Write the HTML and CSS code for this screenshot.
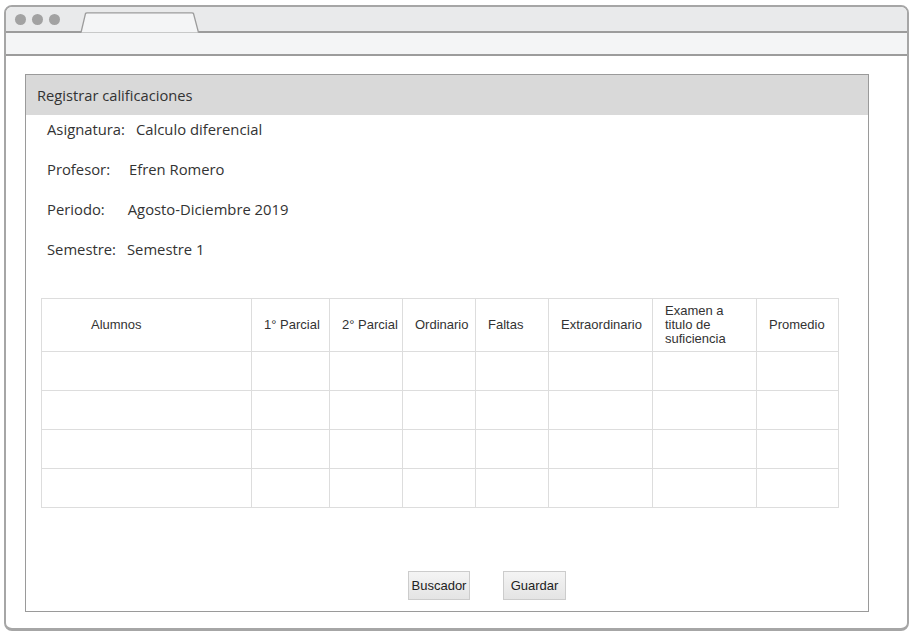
FILE: index.html
```html
<!DOCTYPE html>
<html lang="es">
<head>
<meta charset="utf-8">
<title>Registrar calificaciones</title>
<link rel="stylesheet" href="styles.css">
</head>
<body>
<div class="browser">
  <div class="tabbar">
    <span class="dot"></span><span class="dot"></span><span class="dot"></span>
    <svg class="tab" width="120" height="21" viewBox="0 0 120 21">
      <path d="M1 20.5 L5.5 1.5 Q6 0.8 7 0.8 L112 0.8 Q113 0.8 113.5 1.5 L118.5 20.5" fill="#f4f5f6" stroke="#9c9c9c" stroke-width="1.3"/>
    </svg>
  </div>
  <div class="addressbar"></div>
  <div class="content">
    <div class="panel">
      <div class="panel-head">Registrar calificaciones</div>
      <div class="info">
        <div class="info-row"><span class="lbl">Asignatura:</span><span class="val val-a">Calculo diferencial</span></div>
        <div class="info-row"><span class="lbl">Profesor:</span><span class="val val-p">Efren Romero</span></div>
        <div class="info-row"><span class="lbl">Periodo:</span><span class="val val-r">Agosto-Diciembre 2019</span></div>
        <div class="info-row"><span class="lbl">Semestre:</span><span class="val val-s">Semestre 1</span></div>
      </div>
      <table class="grades">
        <colgroup>
          <col class="c-alum"><col class="c-p1"><col class="c-p2"><col class="c-ord"><col class="c-fal"><col class="c-ext"><col class="c-exa"><col class="c-pro">
        </colgroup>
        <thead>
          <tr>
            <th class="th-alum">Alumnos</th>
            <th>1° Parcial</th>
            <th>2° Parcial</th>
            <th>Ordinario</th>
            <th>Faltas</th>
            <th>Extraordinario</th>
            <th>Examen a<br>titulo de<br>suficiencia</th>
            <th>Promedio</th>
          </tr>
        </thead>
        <tbody>
          <tr><td></td><td></td><td></td><td></td><td></td><td></td><td></td><td></td></tr>
          <tr><td></td><td></td><td></td><td></td><td></td><td></td><td></td><td></td></tr>
          <tr><td></td><td></td><td></td><td></td><td></td><td></td><td></td><td></td></tr>
          <tr><td></td><td></td><td></td><td></td><td></td><td></td><td></td><td></td></tr>
        </tbody>
      </table>
      <div class="actions">
        <button class="btn btn-b" type="button">Buscador</button>
        <button class="btn btn-g" type="button">Guardar</button>
      </div>
    </div>
  </div>
</div>
</body>
</html>
```

FILE: styles.css
```css
html, body {
  margin: 0;
  padding: 0;
  background: #ffffff;
}

body {
  padding: 5px 4px 0 4px;
}

.browser {
  width: 905px;
  height: 626px;
  box-sizing: border-box;
  border: 2px solid #a6a6a6;
  border-bottom-width: 3px;
  border-radius: 8px;
  overflow: hidden;
  display: flex;
  flex-direction: column;
  background: #ffffff;
}

.tabbar {
  height: 24px;
  background: #e9eaeb;
  border-bottom: 2px solid #9c9c9c;
  display: flex;
  align-items: center;
  padding-left: 9px;
  position: relative;
}

.dot {
  width: 11px;
  height: 11px;
  border-radius: 50%;
  background: #a2a2a2;
  margin-right: 6px;
  margin-top: 1px;
}

.tab {
  position: absolute;
  left: 74px;
  bottom: -2px;
}

.addressbar {
  height: 21px;
  background: #f4f5f6;
  border-bottom: 2px solid #9c9c9c;
}

.content {
  flex: 1;
  padding: 18px 39px 16px 19px;
  display: flex;
}

.panel {
  flex: 1;
  border: 1px solid #9a9a9a;
  display: flex;
  flex-direction: column;
}

.panel-head {
  height: 40px;
  line-height: 41px;
  background: #d9d9d9;
  padding-left: 11px;
  font-family: "Open Sans", "Noto Sans", sans-serif;
  font-size: 14.7px;
  color: #333333;
}

.info {
  padding: 4px 0 0 21px;
  display: flex;
  flex-direction: column;
  gap: 20px;
  font-family: "Open Sans", "Noto Sans", sans-serif;
  font-size: 14.8px;
  color: #333333;
}

.info-row {
  height: 20px;
  line-height: 21px;
  display: flex;
}

.val-a { margin-left: 11px; }
.val-p { margin-left: 19px; }
.val-r { margin-left: 23px; }
.val-s { margin-left: 11px; }

.grades {
  margin: 39px 29px 0 15px;
  width: 797px;
  border-collapse: collapse;
  table-layout: fixed;
  font-family: "Liberation Sans", Arial, sans-serif;
  font-size: 13px;
  color: #333333;
}

.c-alum { width: 210px; }
.c-p1 { width: 78px; }
.c-p2 { width: 73px; }
.c-ord { width: 73px; }
.c-fal { width: 73px; }
.c-ext { width: 104px; }
.c-exa { width: 104px; }
.c-pro { width: 82px; }

.grades th,
.grades td {
  border: 1px solid #dddddd;
  padding: 0 0 0 12px;
  text-align: left;
  font-weight: normal;
  vertical-align: middle;
}

.grades th {
  height: 52px;
  line-height: 14px;
}

.grades th.th-alum {
  padding-left: 49px;
}

.grades td {
  height: 38px;
}

.actions {
  margin-top: 63px;
  padding-left: 382px;
  display: flex;
  gap: 33px;
}

.btn {
  height: 29px;
  box-sizing: border-box;
  border: 1px solid #cccccc;
  background: linear-gradient(#f4f4f4, #e4e4e4);
  font-family: "Liberation Sans", Arial, sans-serif;
  font-size: 13px;
  color: #222222;
  padding: 0;
  border-radius: 0;
}

.btn-b { width: 62px; }
.btn-g { width: 63px; }
```
